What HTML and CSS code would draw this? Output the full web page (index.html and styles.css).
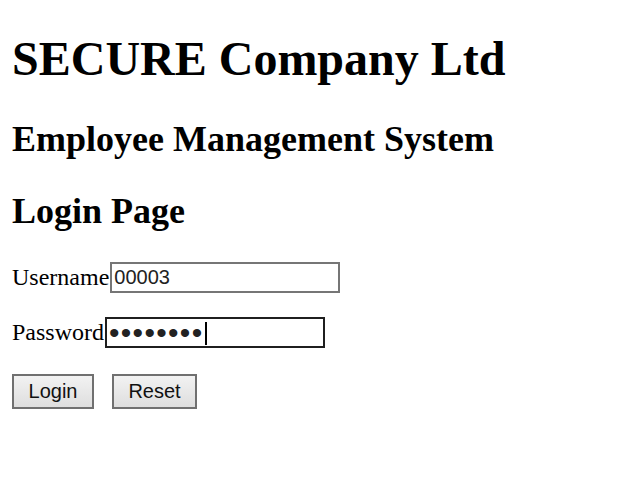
FILE: index.html
```html
<!DOCTYPE html>
<html>
<head>
<meta charset="utf-8">
<title>Login Page</title>
<link rel="stylesheet" href="styles.css">
</head>
<body>
<h1 class="title">SECURE Company Ltd</h1>
<h2 class="subtitle">Employee Management System</h2>
<h2 class="subtitle">Login Page</h2>
<form class="login">
  <p class="row"><label class="label" for="u">Username</label><input class="field field-user" id="u" type="text" value="00003"></p>
  <p class="row"><label class="label" for="p">Password</label><span class="pass-wrap"><input class="field field-pass" id="p" type="password" value="password"><span class="caret"></span></span></p>
  <p class="row buttons"><button class="btn btn-login" type="button">Login</button><button class="btn btn-reset" type="reset">Reset</button></p>
</form>
</body>
</html>
```
FILE: styles.css
```css
html, body {
  background: #fff;
}
body {
  margin: 12px;
  font-family: "Liberation Serif", "Times New Roman", serif;
  font-size: 24px;
  color: #000;
}
.title {
  font-size: 48px;
  font-weight: bold;
  margin: 19px 0 32px;
}
.subtitle {
  font-size: 36px;
  font-weight: bold;
  margin: 30px 0;
}
.login {
  margin: 0;
}
.row {
  margin: 24px 0;
  display: flex;
  align-items: center;
}
.label {
  font-size: 24px;
}
.field {
  font-family: "Liberation Sans", Arial, sans-serif;
  font-size: 20px;
  box-sizing: border-box;
  height: 31px;
  padding: 1px 2px;
  border: 2px solid #767676;
  background: #fff;
  color: #222;
  margin: 0 0 0 1px;
}
.field-user {
  width: 230px;
}
.pass-wrap {
  position: relative;
  display: flex;
}
.field-pass {
  width: 220px;
  border-color: #1f1f1f;
  outline: none;
  font-size: 30px;
  letter-spacing: 1.3px;
  padding: 0 2px;
}
.caret {
  position: absolute;
  left: 101px;
  top: 5px;
  width: 2px;
  height: 23px;
  background: #000;
}
.field:focus {
  outline: none;
}
.buttons {
  gap: 18px;
  margin-top: 26px;
}
.btn {
  font-family: "Liberation Sans", Arial, sans-serif;
  font-size: 20px;
  color: #111;
  height: 35px;
  padding: 0;
  border: 2px solid #707070;
  background: linear-gradient(#f2f2f2, #dedede);
  border-radius: 0;
  text-align: center;
}
.btn-login {
  width: 82px;
}
.btn-reset {
  width: 85px;
}
```
